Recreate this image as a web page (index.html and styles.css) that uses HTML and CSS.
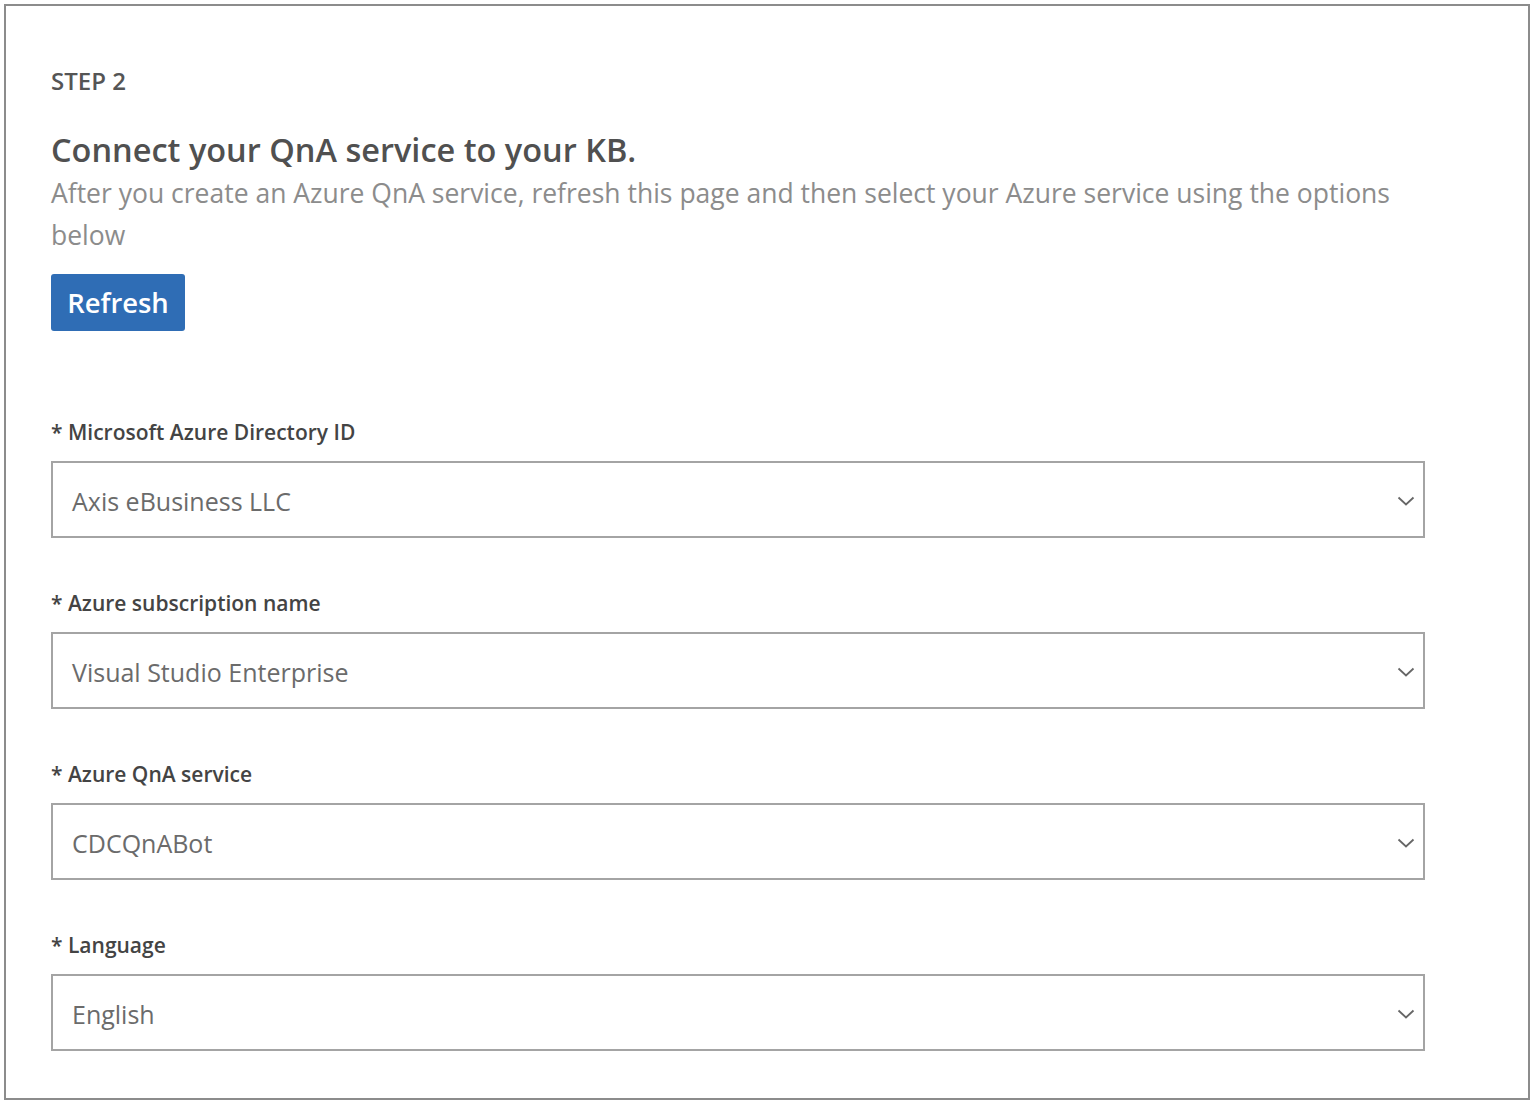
FILE: index.html
```html
<!DOCTYPE html>
<html lang="en">
<head>
<meta charset="utf-8">
<title>Connect your QnA service</title>
<link rel="stylesheet" href="styles.css">
</head>
<body>
<div class="frame">
  <div class="step">STEP 2</div>
  <h1 class="title">Connect your QnA service to your KB.</h1>
  <p class="subtitle">After you create an Azure QnA service, refresh this page and then select your Azure service using the options below</p>
  <button class="refresh">Refresh</button>

  <div class="fields">
    <div class="field">
      <div class="label">* Microsoft Azure Directory ID</div>
      <div class="select"><span class="value">Axis eBusiness LLC</span><svg class="chev" width="18" height="10" viewBox="0 0 18 10"><polyline points="1.5,1.5 9,8.5 16.5,1.5" fill="none" stroke="#666666" stroke-width="1.8"/></svg></div>
    </div>
    <div class="field">
      <div class="label">* Azure subscription name</div>
      <div class="select"><span class="value">Visual Studio Enterprise</span><svg class="chev" width="18" height="10" viewBox="0 0 18 10"><polyline points="1.5,1.5 9,8.5 16.5,1.5" fill="none" stroke="#666666" stroke-width="1.8"/></svg></div>
    </div>
    <div class="field">
      <div class="label">* Azure QnA service</div>
      <div class="select"><span class="value">CDCQnABot</span><svg class="chev" width="18" height="10" viewBox="0 0 18 10"><polyline points="1.5,1.5 9,8.5 16.5,1.5" fill="none" stroke="#666666" stroke-width="1.8"/></svg></div>
    </div>
    <div class="field">
      <div class="label">* Language</div>
      <div class="select"><span class="value">English</span><svg class="chev" width="18" height="10" viewBox="0 0 18 10"><polyline points="1.5,1.5 9,8.5 16.5,1.5" fill="none" stroke="#666666" stroke-width="1.8"/></svg></div>
    </div>
  </div>
</div>
</body>
</html>
```

FILE: styles.css
```css
html, body {
  margin: 0;
  padding: 0;
  background: #ffffff;
}

body {
  font-family: "Open Sans", "Noto Sans", "Liberation Sans", sans-serif;
}

.frame {
  margin: 4px;
  width: 1526px;
  height: 1096px;
  box-sizing: border-box;
  border: 2px solid #8c8c8c;
  padding: 60px 0 0 45px;
}

.step {
  font-size: 24px;
  font-weight: 600;
  color: #555555;
  line-height: 30px;
}

.title {
  margin: 32px 0 0;
  font-size: 32.5px;
  font-weight: 600;
  color: #505050;
  line-height: 44px;
}

.subtitle {
  margin: 0;
  width: 1374px;
  font-size: 26.5px;
  font-weight: 400;
  color: #8c8c8c;
  line-height: 42px;
}

.refresh {
  display: block;
  margin-top: 18px;
  width: 134px;
  height: 57px;
  padding: 0;
  border: none;
  border-radius: 3px;
  background: #2f6db5;
  color: #ffffff;
  font-family: inherit;
  font-size: 27.4px;
  font-weight: 600;
}

.fields {
  margin-top: 86px;
  display: flex;
  flex-direction: column;
  gap: 50px;
  width: 1374px;
}

.field {
  display: flex;
  flex-direction: column;
  gap: 14px;
}

.label {
  font-size: 21px;
  font-weight: 600;
  color: #444444;
  line-height: 30px;
}

.select {
  height: 77px;
  box-sizing: border-box;
  border: 2px solid #a4a4a4;
  display: flex;
  align-items: center;
  justify-content: space-between;
  padding: 2px 8px 0 19px;
}

.value {
  font-size: 25px;
  color: #6b6b6b;
}

.chev {
  display: block;
}
```
